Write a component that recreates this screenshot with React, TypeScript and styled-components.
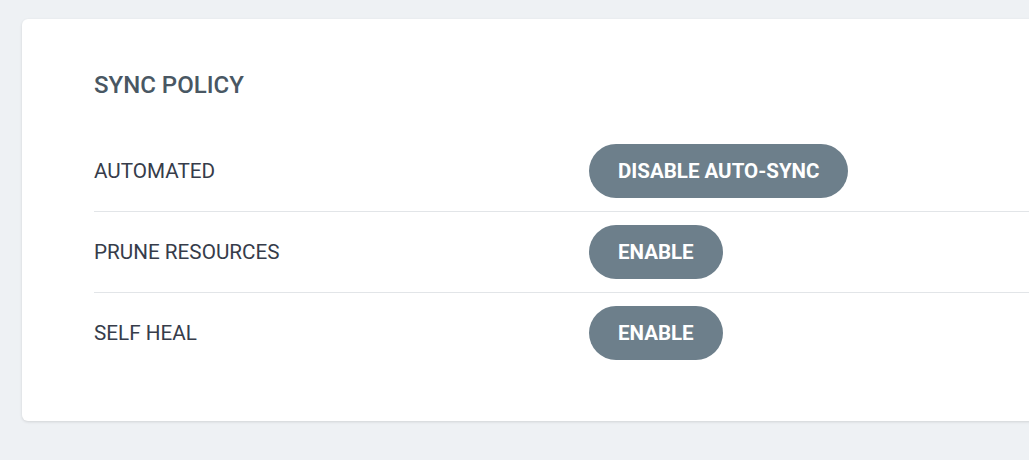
import styled, { createGlobalStyle } from 'styled-components';

const GlobalStyle = createGlobalStyle`
  html, body {
    margin: 0;
    padding: 0;
    background: #eef1f4;
    overflow: hidden;
    font-family: Roboto, 'Liberation Sans', sans-serif;
  }
`;

const Page = styled.div`
  padding: 19px 0 0 22px;
  height: 460px;
  box-sizing: border-box;
  overflow: hidden;
`;

const Card = styled.div`
  width: 1100px;
  background: #ffffff;
  border-radius: 6px;
  box-shadow: 0 1px 3px rgba(0, 0, 0, 0.12);
  padding: 52px 0 48px 72px;
  box-sizing: border-box;
`;

const Title = styled.h2`
  margin: 0 0 32px;
  font-size: 24px;
  font-weight: 500;
  line-height: 28px;
  color: #495763;
`;

const Row = styled.div<{ $last?: boolean }>`
  display: grid;
  grid-template-columns: 495px 1fr;
  align-items: center;
  padding: 13px 0;
  border-bottom: ${(p) => (p.$last ? 'none' : '1px solid #e2e5e8')};
`;

const Label = styled.div`
  font-size: 20.7px;
  color: #363c4a;
`;

const PillButton = styled.button`
  justify-self: start;
  height: 54px;
  padding: 0 29px;
  border: none;
  border-radius: 27px;
  background: #6d7f8b;
  color: #ffffff;
  font-family: Roboto, 'Liberation Sans', sans-serif;
  font-size: 20.5px;
  font-weight: 700;
  cursor: pointer;
`;

const rows = [
  { label: 'AUTOMATED', action: 'DISABLE AUTO-SYNC' },
  { label: 'PRUNE RESOURCES', action: 'ENABLE' },
  { label: 'SELF HEAL', action: 'ENABLE' },
];

export default function App() {
  return (
    <>
      <GlobalStyle />
      <Page>
        <Card>
          <Title>SYNC POLICY</Title>
          {rows.map((r, i) => (
            <Row key={r.label} $last={i === rows.length - 1}>
              <Label>{r.label}</Label>
              <PillButton>{r.action}</PillButton>
            </Row>
          ))}
        </Card>
      </Page>
    </>
  );
}
